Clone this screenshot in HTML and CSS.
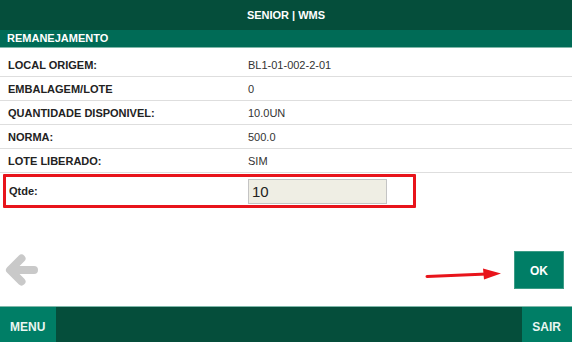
FILE: index.html
```html
<html>
<head>
<meta name="viewport" content="width=device-width, initial-scale=1.0">
<link rel="stylesheet" href="styles.css">
</head>
<body>

<div class="screen">

    <div class="topbar">SENIOR | WMS</div>
    <div class="subbar">REMANEJAMENTO</div>

    <div class="content">
        <div class="row">
            <span class="label">LOCAL ORIGEM:</span>
            <span class="value">BL1-01-002-2-01</span>
        </div>
        <div class="row">
            <span class="label">EMBALAGEM/LOTE</span>
            <span class="value">0</span>
        </div>
        <div class="row">
            <span class="label">QUANTIDADE DISPONIVEL:</span>
            <span class="value">10.0UN</span>
        </div>
        <div class="row">
            <span class="label">NORMA:</span>
            <span class="value">500.0</span>
        </div>
        <div class="row">
            <span class="label">LOTE LIBERADO:</span>
            <span class="value">SIM</span>
        </div>

        <div class="qtde">
            <span class="label qlabel">Qtde:</span>
            <input class="campo" type="text" value="10">
        </div>
    </div>

    <div class="acoes">
        <svg class="voltar" width="33" height="34" viewBox="0 0 33 34">
            <path d="M29 17 H8 M16.5 5.5 L5 17 L16.5 28.5" fill="none" stroke="#c9c9c9" stroke-width="8" stroke-linecap="round" stroke-linejoin="round"/>
        </svg>
        <svg class="seta" width="80" height="14" viewBox="0 0 80 14">
            <path d="M2 9.5 L62 7" stroke="#e8141b" stroke-width="3" stroke-linecap="round"/>
            <path d="M58 1.5 L76 6.5 L59 12.5 Z" fill="#e8141b"/>
        </svg>
        <a href="" class="ok">OK</a>
    </div>

    <div class="rodape">
        <a href="" class="tab">MENU</a>
        <a href="" class="tab">SAIR</a>
    </div>

</div>

</body>
</html>
```

FILE: styles.css
```css
body, html {
    margin:0;
    padding:0;
    width:100%;
    height:100%;
    font-family: "Liberation Sans", Arial, sans-serif;
    font-size: 11px;
    color: #222;
}

.screen {
    width:572px;
    height:342px;
    display: flex;
    flex-direction: column;
    background: #fff;
}

.topbar {
    height:30px;
    line-height:30px;
    background-color: #054e3b;
    color: #fff;
    font-weight: bold;
    text-align: center;
}

.subbar {
    height:17px;
    line-height:17px;
    padding-left:7px;
    background-color: #006b56;
    border-bottom: 1px solid #7fb8aa;
    color: #fff;
    font-weight: bold;
}

.content {
    padding-top:5px;
}

.row {
    display: flex;
    align-items: center;
    height:23px;
    border-bottom: 1px solid #dedede;
}

.label {
    width:240px;
    padding-left:8px;
    font-weight: bold;
}

.value {
    color: #333;
}

/* caixa vermelha de destaque */
.qtde {
    display: flex;
    align-items: center;
    width:407px;
    height:28px;
    margin-left:3px;
    margin-top:1px;
    border: 3px solid #e8141b;
    border-radius: 1px;
}

.qlabel {
    width:239px;
    padding-left:3px;
}

.campo {
    width:139px;
    height:25px;
    padding:0 0 0 3px;
    margin:0;
    font-family: "Liberation Sans", Arial, sans-serif;
    font-size: 15px;
    color: #222;
    background-color: #efeee4;
    border: 1px solid #c4c4c4;
    box-sizing: border-box;
}

.acoes {
    flex: 1;
    display: flex;
    align-items: center;
    padding: 26px 8px 0 5px;
    position: relative;
}

.voltar {
    display: block;
}

.seta {
    position: absolute;
    left:425px;
    top:59px;
}

.ok {
    margin-left: auto;
    width:50px;
    height:38px;
    line-height:38px;
    text-align: center;
    background-color: #007e66;
    border: 1px solid #3c9c86;
    box-sizing: border-box;
    color: #fff;
    font-size: 12px;
    font-weight: bold;
    text-decoration: none;
}

.rodape {
    height:35px;
    display: flex;
    justify-content: space-between;
    background-color: #054e3b;
    border-top: 1px solid #7fb8aa;
}

.tab {
    display: block;
    padding: 0 11px 0 10px;
    line-height:41px;
    background-color: #007e66;
    color: #eaf6f2;
    font-size: 12px;
    font-weight: bold;
    text-decoration: none;
}
```
